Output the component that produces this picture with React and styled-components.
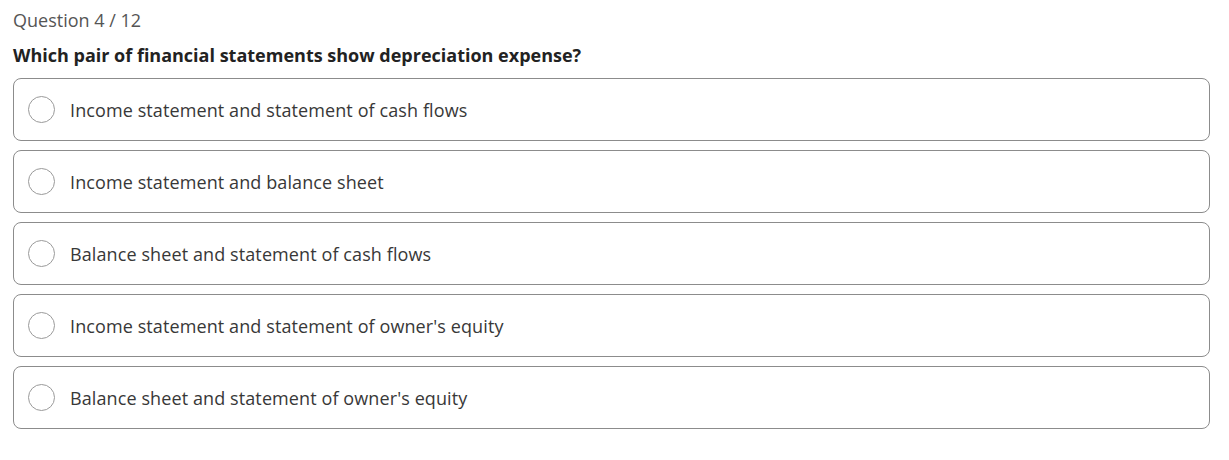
import styled, { createGlobalStyle } from "styled-components";

const GlobalStyle = createGlobalStyle`
    body {
        margin: 0;
        background: #fff;
        font-family: "Open Sans", "Liberation Sans", sans-serif;
    }
`;

const Page = styled.div`
    padding: 8px 19px 0 13px;
`;

const Counter = styled.div`
    font-size: 18px;
    line-height: 24px;
    color: #555;
`;

const Title = styled.h2`
    margin: 11px 0 11px;
    font-size: 18px;
    line-height: 24px;
    font-weight: 700;
    color: #222;
`;

const OptionList = styled.div`
    display: flex;
    flex-direction: column;
    gap: 9px;
`;

const Option = styled.label`
    display: flex;
    align-items: center;
    gap: 15px;
    height: 63px;
    box-sizing: border-box;
    padding: 0 14px;
    border: 1px solid #8c8c8c;
    border-radius: 8px;
    cursor: pointer;
`;

const Radio = styled.span`
    width: 27px;
    height: 27px;
    box-sizing: border-box;
    border: 1px solid #9a9a9a;
    border-radius: 50%;
    flex-shrink: 0;
`;

const OptionText = styled.span`
    font-size: 18px;
    letter-spacing: 0.1px;
    color: #383838;
`;

const options = [
    "Income statement and statement of cash flows",
    "Income statement and balance sheet",
    "Balance sheet and statement of cash flows",
    "Income statement and statement of owner's equity",
    "Balance sheet and statement of owner's equity",
];

function App() {
    return (
        <Page>
            <GlobalStyle />
            <Counter>Question 4 / 12</Counter>
            <Title>Which pair of financial statements show depreciation expense?</Title>
            <OptionList>
                {options.map((text) => (
                    <Option key={text}>
                        <Radio />
                        <OptionText>{text}</OptionText>
                    </Option>
                ))}
            </OptionList>
        </Page>
    );
}

export default App;
